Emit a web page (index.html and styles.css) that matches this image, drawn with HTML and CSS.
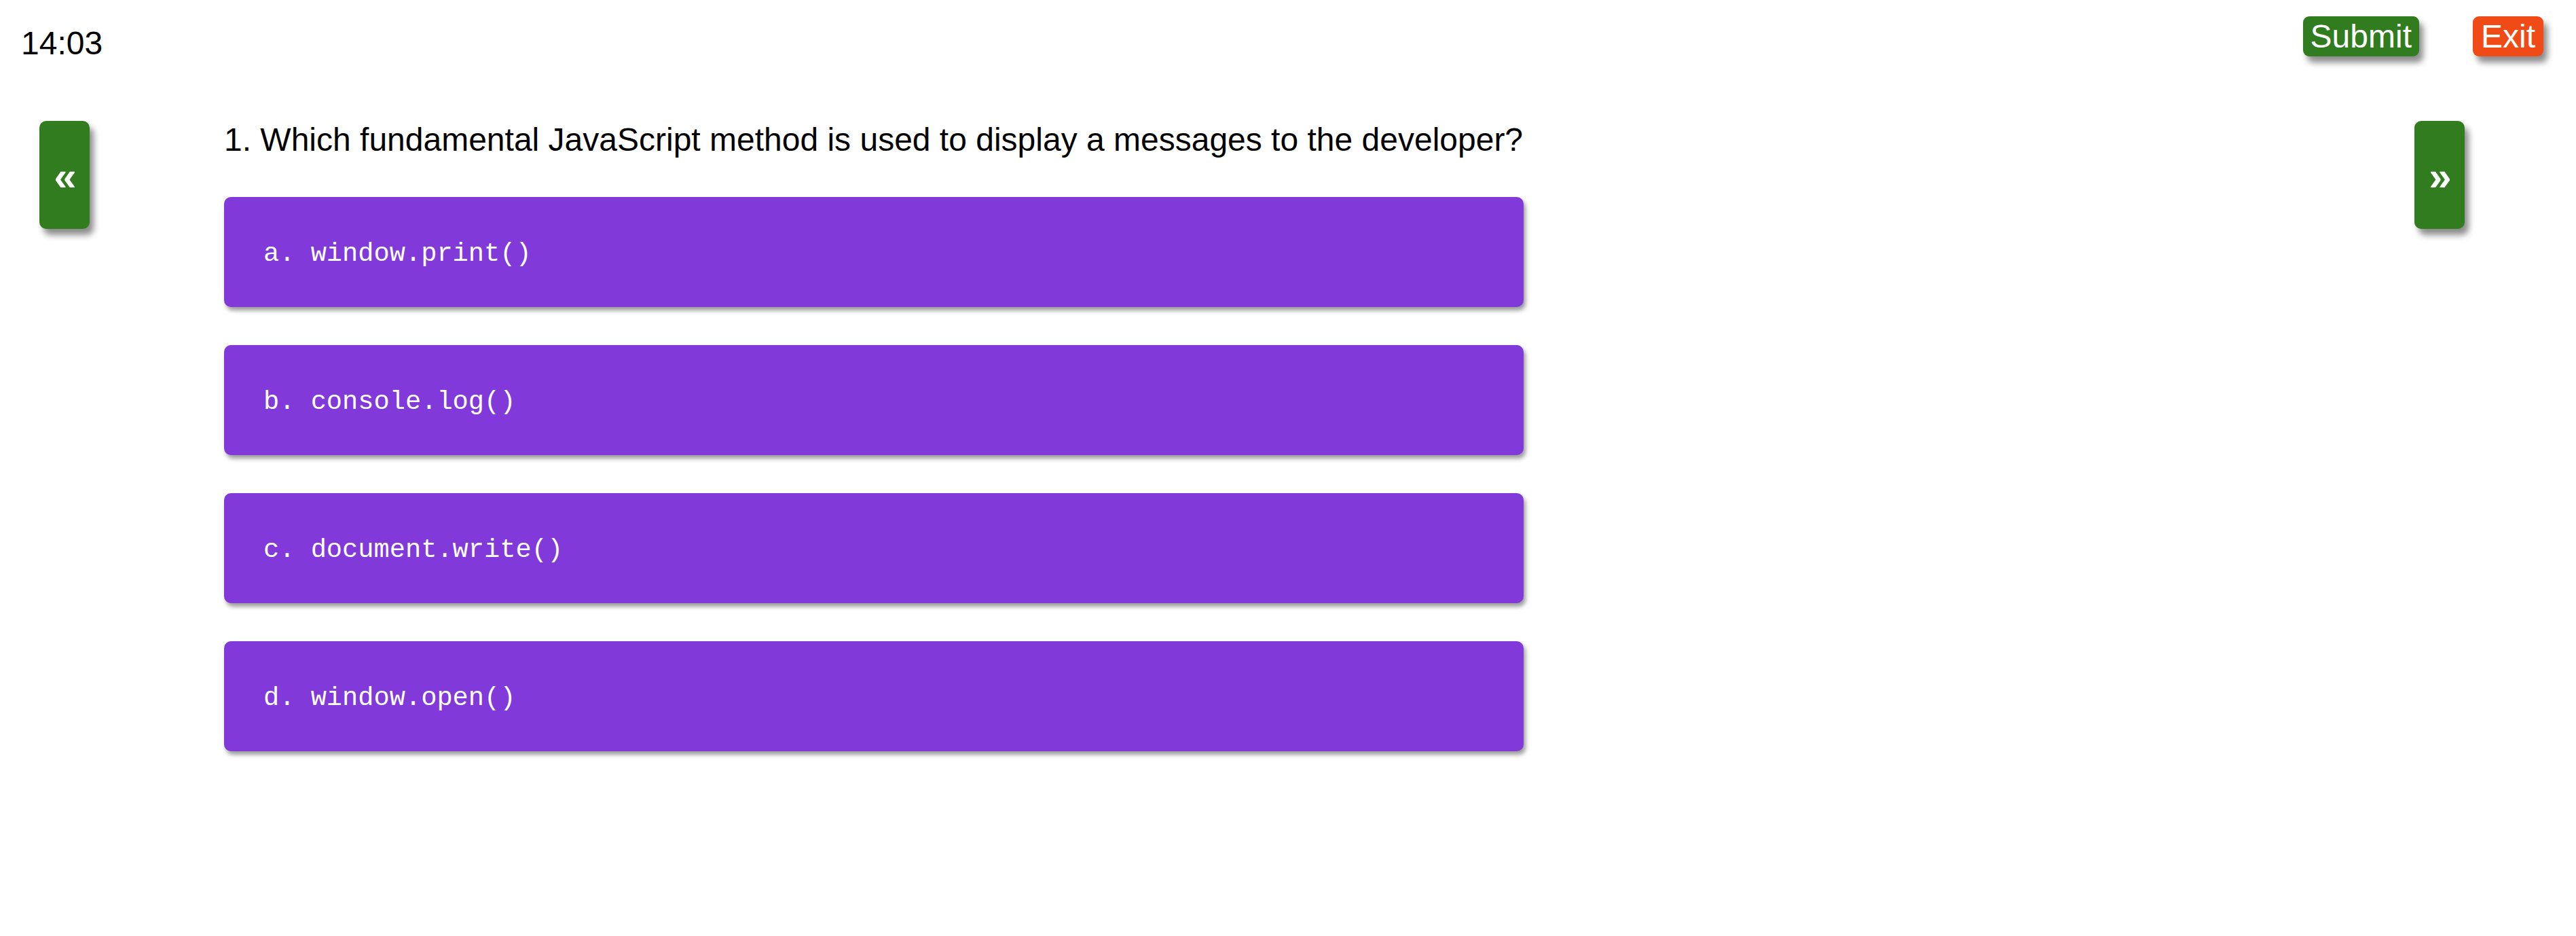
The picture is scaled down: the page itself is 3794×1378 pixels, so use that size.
FILE: index.html
```html
<!DOCTYPE html>
<html lang="en">
<head>
<meta charset="utf-8">
<title>Quiz</title>
<link rel="stylesheet" href="styles.css">
</head>
<body>
<header class="topbar">
  <div class="timer">14:03</div>
  <div class="actions">
    <button class="btn btn-submit">Submit</button>
    <button class="btn btn-exit">Exit</button>
  </div>
</header>
<main class="quiz">
  <button class="nav nav-prev">&laquo;</button>
  <section class="question">
    <p class="question-text">1. Which fundamental JavaScript method is used to display a messages to the developer?</p>
    <ul class="options">
      <li class="option">a. window.print()</li>
      <li class="option">b. console.log()</li>
      <li class="option">c. document.write()</li>
      <li class="option">d. window.open()</li>
    </ul>
  </section>
  <button class="nav nav-next">&raquo;</button>
</main>
</body>
</html>
```
FILE: styles.css
```css
html, body {
  margin: 0;
  padding: 0;
  background: #ffffff;
}
body {
  font-family: "Liberation Sans", Arial, Helvetica, sans-serif;
  color: #000;
  width: 3794px;
  height: 1378px;
  overflow: hidden;
}
.topbar {
  display: flex;
  justify-content: space-between;
  align-items: flex-start;
  padding: 24px 48px 0 31px;
}
.timer {
  font-size: 48px;
  line-height: 55px;
  margin-top: 12px;
}
.actions {
  display: flex;
  gap: 79px;
}
.btn {
  font-family: "Liberation Sans", Arial, Helvetica, sans-serif;
  font-size: 48px;
  line-height: 55px;
  color: #fff;
  border: none;
  border-radius: 9px;
  padding: 2px 11px;
  margin: 0;
  box-shadow: 6px 9px 10px rgba(0, 0, 0, 0.45);
}
.btn-submit { background: #317c1e; }
.btn-exit { background: #f04b17; padding: 2px 12px; }

.quiz {
  display: flex;
  align-items: flex-start;
  margin-top: 87px;
  padding-left: 58px;
  padding-right: 164px;
}
.nav {
  width: 74px;
  height: 159px;
  flex: none;
  padding: 4px 0 0 2px;
  margin: 0;
  border: none;
  border-radius: 10px;
  background: #317c1e;
  color: #fff;
  font-family: "Liberation Sans", Arial, Helvetica, sans-serif;
  font-weight: bold;
  font-size: 60px;
  line-height: 1;
  box-shadow: 6px 9px 10px rgba(0, 0, 0, 0.45);
  display: flex;
  align-items: center;
  justify-content: center;
}
.nav-next { margin-left: auto; }
.question {
  width: 1914px;
  margin-left: 198px;
}
.question-text {
  margin: 0;
  font-size: 48px;
  line-height: 55px;
}
.options {
  list-style: none;
  margin: 57px 0 0;
  padding: 0;
  display: flex;
  flex-direction: column;
  gap: 56px;
}
.option {
  background: #8139da;
  color: #fff;
  border-radius: 10px;
  padding: 62px 58px 56px;
  font-family: "Liberation Mono", "Courier New", monospace;
  font-size: 38.7px;
  line-height: 44px;
  box-shadow: 3px 5px 6px rgba(0, 0, 0, 0.4);
}
```
